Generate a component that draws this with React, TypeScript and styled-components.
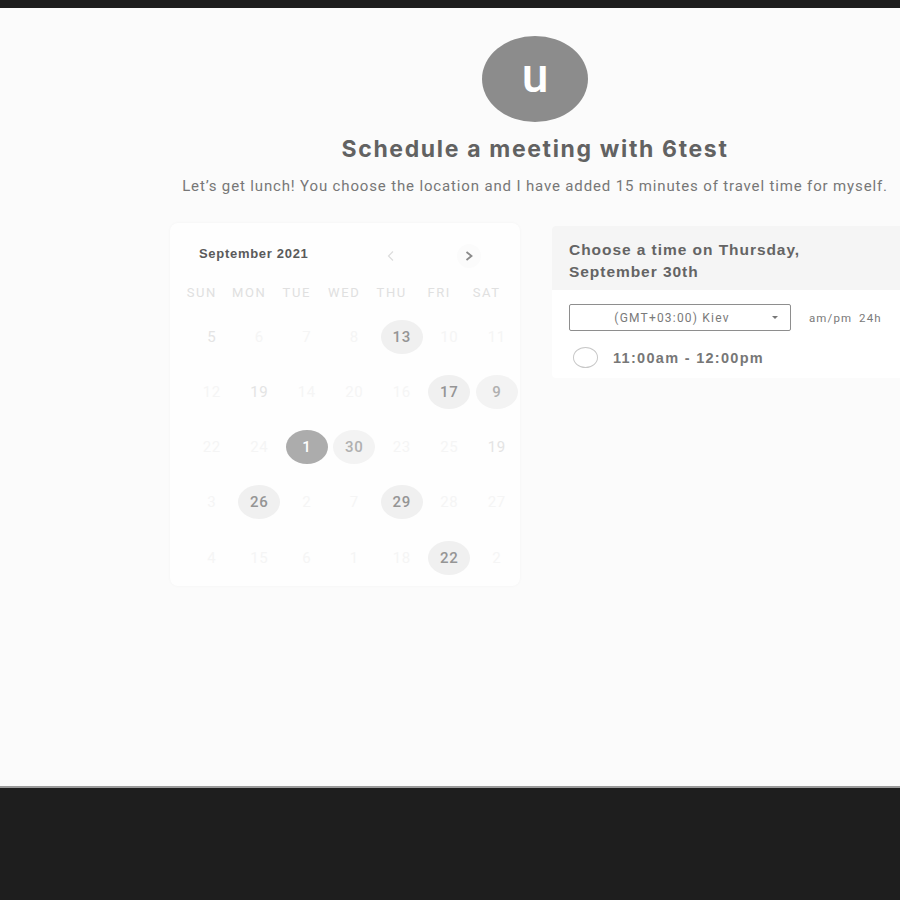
import React from "react";
import styled, { createGlobalStyle } from "styled-components";

const Global = createGlobalStyle`
  html, body { margin: 0; padding: 0; background: #1e1e1e; }
  body { font-family: "Liberation Sans", Arial, sans-serif; }
`;

const Page = styled.div`
  display: flex;
  flex-direction: column;
  height: 900px;
  overflow: hidden;
`;

const TopBar = styled.div`
  height: 8px;
  background: #1e1e1e;
  flex: none;
`;

const Main = styled.main`
  height: 780px;
  flex: none;
  background: #fbfbfb;
  border-bottom: 2px solid #9a9a9a;
  padding-left: 170px;
  box-sizing: border-box;
`;

const Column = styled.div`
  width: 730px;
  display: flex;
  flex-direction: column;
  align-items: center;
`;

const Avatar = styled.div`
  margin-top: 28px;
  width: 106px;
  height: 86px;
  border-radius: 50%;
  background: #8c8c8c;
  color: #fff;
  display: flex;
  align-items: center;
  justify-content: center;
  font-family: Roboto, sans-serif;
  font-size: 48px;
  font-weight: 500;
  line-height: 1;
  padding-bottom: 6px;
  box-sizing: border-box;
`;

const Title = styled.h1`
  margin: 14px 0 0;
  font-family: Inter, "Liberation Sans", sans-serif;
  font-size: 23px;
  font-weight: 700;
  color: #626262;
  letter-spacing: 1.65px;
  line-height: 26px;
`;

const Subtitle = styled.p`
  margin: 14px 0 0;
  font-family: Roboto, sans-serif;
  font-size: 15px;
  color: #777;
  line-height: 20px;
  white-space: nowrap;
  letter-spacing: 0.85px;
`;

const Cards = styled.div`
  margin-top: 27px;
  width: 100%;
  display: flex;
  gap: 32px;
  align-items: flex-start;
`;

const Calendar = styled.section`
  width: 350px;
  height: 363px;
  flex: none;
  background: #fefefe;
  border-radius: 8px;
  box-shadow: 0 0 3px rgba(0, 0, 0, 0.04);
  box-sizing: border-box;
  padding-top: 21px;
`;

const CalHeader = styled.div`
  display: flex;
  align-items: center;
  height: 18px;
  padding-left: 29px;
`;

const Month = styled.div`
  font-family: "Liberation Sans", Arial, sans-serif;
  font-size: 13px;
  font-weight: 700;
  color: #5a5a5a;
  letter-spacing: 0.7px;
  width: 180px;
`;

const Chevron = styled.span<{ $dim?: boolean }>`
  width: 24px;
  height: 24px;
  display: flex;
  align-items: center;
  justify-content: center;
  margin-top: 6px;
  color: ${(p) => (p.$dim ? "#dcdcdc" : "#8a8a8a")};
  margin-left: ${(p) => (p.$dim ? "0" : "54px")};
  border-radius: 50%;
  background: ${(p) => (p.$dim ? "transparent" : "#fbfbfb")};
`;

const WeekRow = styled.div`
  display: grid;
  grid-template-columns: repeat(7, 47.5px);
  margin: 23px 0 0 8px;
`;

const WeekDay = styled.div`
  text-align: center;
  font-family: Roboto, sans-serif;
  font-size: 13px;
  color: #e0e0e0;
  letter-spacing: 1.6px;
  line-height: 16px;
`;

const DaysGrid = styled.div`
  display: grid;
  grid-template-columns: repeat(7, 47.5px);
  grid-auto-rows: 55.25px;
  margin: 8px 0 0 18px;
`;

const Cell = styled.div`
  display: flex;
  align-items: center;
  justify-content: center;
`;

type Kind = "off" | "faint" | "open" | "soft" | "sel";

const bg: Record<Kind, string> = {
  off: "transparent",
  faint: "transparent",
  open: "#f0f0f0",
  soft: "#f3f3f3",
  sel: "#acacac",
};
const fg: Record<Kind, string> = {
  off: "#f5f5f5",
  faint: "#e4e4e4",
  open: "#959595",
  soft: "#b0b0b0",
  sel: "#ffffff",
};

const Day = styled.div<{ $kind: Kind }>`
  width: 42px;
  height: 34px;
  border-radius: 50%;
  display: flex;
  align-items: center;
  justify-content: center;
  font-family: Roboto, sans-serif;
  font-size: 15px;
  letter-spacing: 0.6px;
  font-weight: ${(p) => (p.$kind === "off" || p.$kind === "faint" ? 400 : 500)};
  background: ${(p) => bg[p.$kind]};
  color: ${(p) => fg[p.$kind]};
`;

const Panel = styled.section`
  margin-top: 3px;
  width: 348px;
  flex: none;
  background: #ffffff;
  border-radius: 4px 0 0 4px;
  overflow: hidden;
`;

const PanelHead = styled.div`
  background: #f5f5f5;
  height: 64px;
  box-sizing: border-box;
  padding: 13px 17px 0;
  font-family: "Liberation Sans", Arial, sans-serif;
  font-size: 15.5px;
  font-weight: 700;
  color: #646464;
  line-height: 21.5px;
  letter-spacing: 0.95px;
`;

const PanelBody = styled.div`
  padding: 14px 0 0 17px;
  height: 88px;
  box-sizing: border-box;
`;

const ZoneRow = styled.div`
  display: flex;
  align-items: center;
`;

const Select = styled.div`
  width: 222px;
  height: 27px;
  box-sizing: border-box;
  border: 1px solid #8e8e8e;
  border-radius: 2px;
  display: flex;
  align-items: center;
  font-family: Roboto, sans-serif;
  font-size: 12px;
  color: #7a7a7a;
  letter-spacing: 1.2px;
`;

const SelectText = styled.span`
  flex: 1;
  text-align: center;
  padding-left: 2px;
`;

const Caret = styled.span`
  width: 0;
  height: 0;
  border-left: 3px solid transparent;
  border-right: 3px solid transparent;
  border-top: 3px solid #777;
  margin-right: 12px;
`;

const Format = styled.div`
  margin-left: 18px;
  font-family: Roboto, sans-serif;
  font-size: 11.5px;
  color: #7a7a7a;
  letter-spacing: 1.1px;
  word-spacing: 3px;
`;

const SlotRow = styled.div`
  display: flex;
  align-items: center;
  margin-top: 16px;
  padding-left: 4px;
`;

const Radio = styled.span`
  width: 25px;
  height: 21px;
  box-sizing: border-box;
  border: 1px solid #c8c8c8;
  border-radius: 50%;
  background: #fff;
`;

const SlotText = styled.span`
  margin-left: 15px;
  font-family: "Liberation Sans", Arial, sans-serif;
  font-size: 14.5px;
  font-weight: 700;
  color: #777;
  letter-spacing: 1.3px;
`;

const Footer = styled.div`
  flex: 1;
  background: #1e1e1e;
`;

const days: [string, Kind][] = [
  ["5", "faint"], ["6", "off"], ["7", "off"], ["8", "off"], ["13", "open"], ["10", "off"], ["11", "off"],
  ["12", "off"], ["19", "faint"], ["14", "off"], ["20", "off"], ["16", "off"], ["17", "open"], ["9", "soft"],
  ["22", "off"], ["24", "off"], ["1", "sel"], ["30", "soft"], ["23", "off"], ["25", "off"], ["19", "faint"],
  ["3", "off"], ["26", "open"], ["2", "off"], ["7", "off"], ["29", "open"], ["28", "off"], ["27", "off"],
  ["4", "off"], ["15", "off"], ["6", "off"], ["1", "off"], ["18", "off"], ["22", "open"], ["2", "off"],
];

const weekdays = ["SUN", "MON", "TUE", "WED", "THU", "FRI", "SAT"];

export default function App() {
  return (
    <>
      <Global />
      <Page>
        <TopBar />
        <Main>
          <Column>
            <Avatar>u</Avatar>
            <Title>Schedule a meeting with 6test</Title>
            <Subtitle>
              Let’s get lunch! You choose the location and I have added 15 minutes of travel time for myself.
            </Subtitle>
            <Cards>
              <Calendar>
                <CalHeader>
                  <Month>September 2021</Month>
                  <Chevron $dim>
                    <svg width="10" height="12" viewBox="0 0 10 12" fill="none" stroke="currentColor" strokeWidth="1.2">
                      <path d="M7 1.5 L2.5 6 L7 10.5" />
                    </svg>
                  </Chevron>
                  <Chevron>
                    <svg width="10" height="12" viewBox="0 0 10 12" fill="none" stroke="currentColor" strokeWidth="1.8">
                      <path d="M2.5 2 L7.5 6 L2.5 10" />
                    </svg>
                  </Chevron>
                </CalHeader>
                <WeekRow>
                  {weekdays.map((w) => (
                    <WeekDay key={w}>{w}</WeekDay>
                  ))}
                </WeekRow>
                <DaysGrid>
                  {days.map(([d, k], i) => (
                    <Cell key={i}>
                      <Day $kind={k}>{d}</Day>
                    </Cell>
                  ))}
                </DaysGrid>
              </Calendar>
              <Panel>
                <PanelHead>
                  Choose a time on Thursday,
                  <br />
                  September 30th
                </PanelHead>
                <PanelBody>
                  <ZoneRow>
                    <Select>
                      <SelectText>(GMT+03:00) Kiev</SelectText>
                      <Caret />
                    </Select>
                    <Format>am/pm 24h</Format>
                  </ZoneRow>
                  <SlotRow>
                    <Radio />
                    <SlotText>11:00am - 12:00pm</SlotText>
                  </SlotRow>
                </PanelBody>
              </Panel>
            </Cards>
          </Column>
        </Main>
        <Footer />
      </Page>
    </>
  );
}
